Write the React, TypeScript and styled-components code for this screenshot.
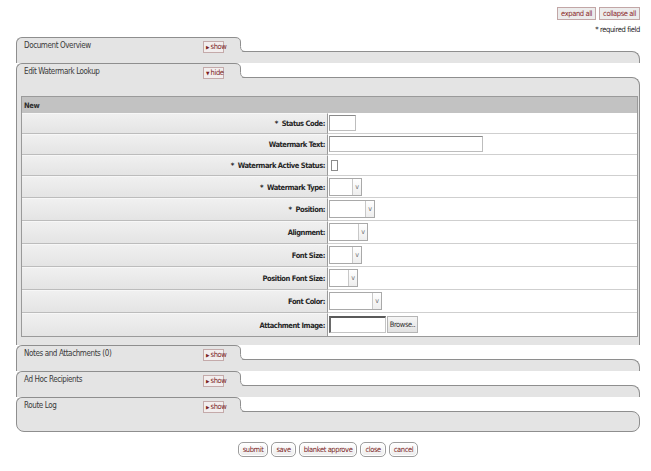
import React from "react";
import styled, { createGlobalStyle } from "styled-components";

const Global = createGlobalStyle`
  html, body { margin: 0; padding: 0; background: #ffffff; }
  body {
    font-family: "DejaVu Sans Condensed", "DejaVu Sans", sans-serif;
    font-stretch: condensed;
    color: #333;
  }
  * { box-sizing: border-box; }
`;

const Page = styled.div`
  width: 651px;
  padding: 7px 11px 0 16px;
  display: flex;
  flex-direction: column;
`;

const TopBar = styled.div`
  display: flex;
  flex-direction: column;
  align-items: flex-end;
`;

const TopButtons = styled.div`
  display: flex;
  gap: 3px;
`;

const TopButton = styled.button`
  height: 13px;
  padding: 0 3px;
  border: 1px solid #c2a6a6;
  background: #ececec;
  color: #8b2a2a;
  font-family: inherit;
  font-stretch: condensed;
  font-size: 7.5px;
  letter-spacing: -0.4px;
  line-height: 11px;
  cursor: pointer;
`;

const RequiredNote = styled.div`
  margin-top: 6px;
  font-size: 7.5px;
  letter-spacing: -0.35px;
  line-height: 8px;
  color: #222;
`;

const Tabs = styled.div`
  margin-top: 3px;
  display: flex;
  flex-direction: column;
`;

const SectionWrap = styled.section`
  display: flex;
  flex-direction: column;
`;

const TabRow = styled.div`
  display: flex;
  height: 15px;
  margin-bottom: -1px;
  position: relative;
  z-index: 1;
`;

const Tab = styled.div`
  width: 216px;
  height: 15px;
  border: 1px solid #8e8e8e;
  border-right: none;
  border-bottom: none;
  border-top-left-radius: 6px;
  background: #e4e4e4;
  display: grid;
  grid-template-columns: 1fr auto;
  align-items: start;
  padding: 3px 8px 0 7px;
`;

const TabTitle = styled.h2`
  margin: 1px 0 0;
  font-size: 8px;
  font-weight: normal;
  letter-spacing: -0.4px;
  line-height: 8px;
  color: #3a3a3a;
`;

const Toggle = styled.button`
  height: 12px;
  width: 21px;
  padding: 0 0 0 2px;
  border: 1px solid #c4aaaa;
  background: #f2eeee;
  color: #7c1f1f;
  font-family: inherit;
  font-stretch: condensed;
  font-size: 7.5px;
  letter-spacing: -0.4px;
  line-height: 10px;
  display: flex;
  align-items: center;
  gap: 1.5px;
  cursor: pointer;
`;

const Arrow = styled.span`
  font-size: 5px;
  color: #7c1f1f;
`;

const TabCurveSvg = styled.svg`
  display: block;
  flex: none;
`;

const TabCurve = () => (
  <TabCurveSvg width="14" height="15" viewBox="0 0 14 15">
    <path d="M0 0 L3 0 Q8 0 8 5 L8 10 Q8 15 13 15 L14 15 L14 15 L0 15 Z" fill="#e4e4e4" />
    <path d="M0 0.5 L3 0.5 Q8.5 0.5 8.5 5 L8.5 9.5 Q8.5 14.5 13 14.5 L14 14.5" fill="none" stroke="#8e8e8e" strokeWidth="1" />
  </TabCurveSvg>
);

const Body = styled.div<{ $last?: boolean; $open?: boolean }>`
  border: 1px solid #8e8e8e;
  border-bottom: ${(p) => (p.$last ? "1px solid #8e8e8e" : "none")};
  border-top-right-radius: 8px;
  border-bottom-left-radius: ${(p) => (p.$last ? "8px" : "0")};
  border-bottom-right-radius: ${(p) => (p.$last ? "8px" : "0")};
  background: #e4e4e4;
  height: ${(p) => (p.$open ? "auto" : p.$last ? "21px" : "12px")};
  padding: ${(p) => (p.$open ? "18px 1px 8px 4px" : "0")};
`;

const FormTable = styled.div`
  border: 1px solid #9a9a9a;
  display: grid;
  grid-template-columns: 306px 1fr;
  background: #fff;
`;

const HeaderCell = styled.div`
  grid-column: 1 / span 2;
  height: 16px;
  background: #c2c2c2;
  font-size: 7.5px;
  font-weight: bold;
  letter-spacing: -0.4px;
  color: #2e2e2e;
  padding-left: 2px;
  display: flex;
  align-items: center;
`;

const LabelCell = styled.div<{ $h: number; $lastRow?: boolean }>`
  height: ${(p) => p.$h}px;
  border-top: 1px solid #f7f7f7;
  border-bottom: ${(p) => (p.$lastRow ? "none" : "1px solid #bcbcbc")};
  border-right: 1px solid #9a9a9a;
  background: linear-gradient(to bottom, #f0f0f0, #e4e4e4);
  display: flex;
  align-items: center;
  justify-content: flex-end;
  padding-right: 2px;
  font-size: 7.5px;
  font-weight: bold;
  letter-spacing: -0.45px;
  color: #262626;
  white-space: pre;
`;

const ValueCell = styled.div<{ $h: number; $lastRow?: boolean }>`
  height: ${(p) => p.$h}px;
  border-bottom: ${(p) => (p.$lastRow ? "none" : "1px solid #cfcfcf")};
  background: #fff;
  display: flex;
  align-items: center;
  padding-left: 1px;
`;

const TextInput = styled.input<{ $w: number }>`
  width: ${(p) => p.$w}px;
  height: 16px;
  margin: 0;
  padding: 0 2px;
  border: 1px solid #bdbdbd;
  border-top-color: #8a8a8a;
  border-left-color: #9a9a9a;
  background: #fff;
  font-size: 7px;
  outline: none;
`;

const CheckBox = styled.span`
  display: inline-block;
  width: 7px;
  height: 11px;
  margin-left: 2px;
  border: 1px solid #8c8c8c;
  background: #fff;
`;

const SelectBox = styled.div<{ $w: number }>`
  width: ${(p) => p.$w}px;
  height: 18px;
  border: 1px solid #a9a9a9;
  background: #fff;
  display: flex;
  justify-content: flex-end;
`;

const SelectArrow = styled.span`
  width: 9px;
  height: 100%;
  border-left: 1px solid #c8c8c8;
  background: linear-gradient(to bottom, #ffffff, #eeeeee);
  font-size: 7px;
  color: #6a6a6a;
  display: flex;
  align-items: center;
  justify-content: center;
`;

const FileWrap = styled.div`
  display: flex;
  align-items: center;
`;

const FileInput = styled.span`
  width: 57px;
  height: 17px;
  border: 1px solid #c4c4c4;
  border-top: 2px solid #5a5a5a;
  border-left: 2px solid #6a6a6a;
  background: #fff;
`;

const BrowseButton = styled.button`
  width: 31px;
  height: 17px;
  margin-left: 1px;
  padding: 0;
  border: 1px solid #b5b5b5;
  background: linear-gradient(to bottom, #f6f6f6, #e2e2e2);
  font-family: inherit;
  font-stretch: condensed;
  font-size: 7.5px;
  letter-spacing: -0.4px;
  color: #333;
`;

const Actions = styled.div`
  margin-top: 10px;
  display: flex;
  justify-content: center;
  gap: 3px;
`;

const ActionButton = styled.button`
  height: 15px;
  padding: 0 4px;
  border: 1px solid #9c9c9c;
  border-radius: 5px;
  background: linear-gradient(to bottom, #ffffff, #ececec);
  box-shadow: inset 0 0 0 1px #fff;
  color: #7c1f1f;
  font-family: inherit;
  font-stretch: condensed;
  font-size: 7.5px;
  letter-spacing: -0.4px;
  line-height: 13px;
  cursor: pointer;
`;

type SectionProps = { title: string; open?: boolean; last?: boolean; children?: React.ReactNode };

const Section = ({ title, open, last, children }: SectionProps) => (
  <SectionWrap>
    <TabRow>
      <Tab>
        <TabTitle>{title}</TabTitle>
        <Toggle>
          <Arrow>{open ? "▼" : "▶"}</Arrow>
          {open ? "hide" : "show"}
        </Toggle>
      </Tab>
      <TabCurve />
    </TabRow>
    <Body $last={last} $open={open}>
      {children}
    </Body>
  </SectionWrap>
);

type Field = {
  label: string;
  required?: boolean;
  kind: "text" | "check" | "select" | "file";
  w?: number;
  h: number;
};

const fields: Field[] = [
  { label: "Status Code:", required: true, kind: "text", w: 27, h: 21 },
  { label: "Watermark Text:", kind: "text", w: 154, h: 21 },
  { label: "Watermark Active Status:", required: true, kind: "check", h: 21 },
  { label: "Watermark Type:", required: true, kind: "select", w: 33, h: 22 },
  { label: "Position:", required: true, kind: "select", w: 46, h: 23 },
  { label: "Alignment:", kind: "select", w: 39, h: 23 },
  { label: "Font Size:", kind: "select", w: 33, h: 23 },
  { label: "Position Font Size:", kind: "select", w: 29, h: 23 },
  { label: "Font Color:", kind: "select", w: 53, h: 23 },
  { label: "Attachment Image:", kind: "file", h: 23 },
];

const Control = ({ f }: { f: Field }) => {
  if (f.kind === "text") return <TextInput $w={f.w || 30} type="text" />;
  if (f.kind === "check") return <CheckBox />;
  if (f.kind === "select")
    return (
      <SelectBox $w={f.w || 30}>
        <SelectArrow>v</SelectArrow>
      </SelectBox>
    );
  return (
    <FileWrap>
      <FileInput />
      <BrowseButton>Browse..</BrowseButton>
    </FileWrap>
  );
};

export default function App() {
  return (
    <>
      <Global />
      <Page>
        <TopBar>
          <TopButtons>
            <TopButton>expand all</TopButton>
            <TopButton>collapse all</TopButton>
          </TopButtons>
          <RequiredNote>* required field</RequiredNote>
        </TopBar>
        <Tabs>
          <Section title="Document Overview" />
          <Section title="Edit Watermark Lookup" open>
            <FormTable>
              <HeaderCell>New</HeaderCell>
              {fields.map((f, i) => {
                const lastRow = i === fields.length - 1;
                return (
                  <React.Fragment key={f.label}>
                    <LabelCell $h={f.h} $lastRow={lastRow}>
                      {f.required ? "*  " : ""}
                      {f.label}
                    </LabelCell>
                    <ValueCell $h={f.h} $lastRow={lastRow}>
                      <Control f={f} />
                    </ValueCell>
                  </React.Fragment>
                );
              })}
            </FormTable>
          </Section>
          <Section title="Notes and Attachments (0)" />
          <Section title="Ad Hoc Recipients" />
          <Section title="Route Log" last />
        </Tabs>
        <Actions>
          <ActionButton>submit</ActionButton>
          <ActionButton>save</ActionButton>
          <ActionButton>blanket approve</ActionButton>
          <ActionButton>close</ActionButton>
          <ActionButton>cancel</ActionButton>
        </Actions>
      </Page>
    </>
  );
}
